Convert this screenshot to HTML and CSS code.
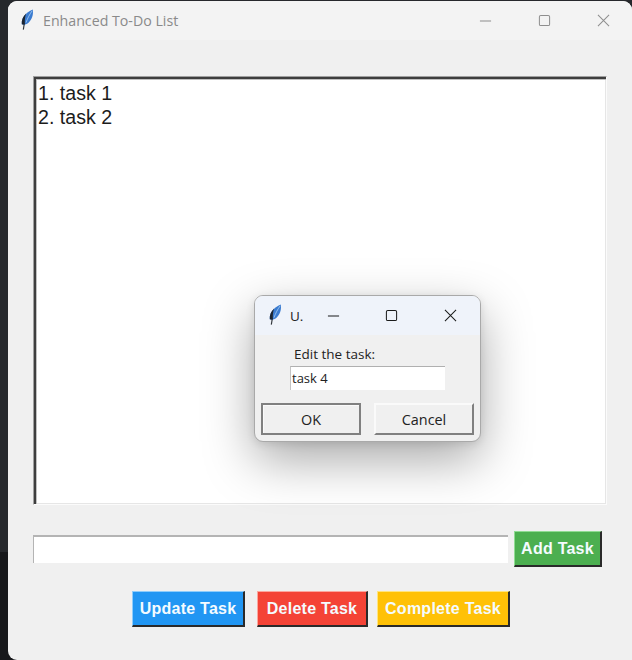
FILE: index.html
```html
<!DOCTYPE html>
<html lang="en">
<head>
<meta charset="utf-8">
<title>Enhanced To-Do List</title>
<link rel="stylesheet" href="styles.css">
</head>
<body>
<svg class="defs" width="0" height="0" aria-hidden="true">
  <symbol id="feather" viewBox="0 0 12 20">
    <path d="M2 19.6 L3 14" stroke="#30343a" stroke-width="1.1" fill="none"/>
    <path d="M0.6 14.6 C-0.2 9.8 3.4 3.4 11 0.4 C12 5.6 9.8 11 6.4 13.6 C4.8 14.8 2.6 15.2 0.6 14.6 Z" fill="#3a7bd0"/>
    <path d="M0.6 14.6 C0.1 11 1.6 7.4 4.6 4.4 C3.6 8 3.2 11 3.6 14.8 C2.6 15 1.6 14.9 0.6 14.6 Z" fill="#1c2530"/>
    <path d="M4.6 13 C5.8 9.4 7.8 5.4 10.4 1.8" stroke="#a4ccf2" stroke-width="0.8" fill="none"/>
  </symbol>
</svg>
<div class="window">
  <header class="titlebar">
    <svg class="feather"><use href="#feather"/></svg>
    <span class="title">Enhanced To-Do List</span>
    <div class="controls">
      <svg class="ctl" viewBox="0 0 14 14"><path d="M1 7.5H13"/></svg>
      <svg class="ctl" viewBox="0 0 14 14"><rect x="1.5" y="1.5" width="11" height="11" rx="1.5"/></svg>
      <svg class="ctl" viewBox="0 0 14 14"><path d="M1 1L13 13M13 1L1 13"/></svg>
    </div>
  </header>
  <main class="content">
    <div class="listbox">
      <div>1. task 1</div>
      <div>2. task 2</div>
    </div>
    <div class="add-row">
      <div class="entry"></div>
      <div class="btn btn-add">Add Task</div>
    </div>
    <div class="btn-row">
      <div class="btn btn-update">Update Task</div>
      <div class="btn btn-delete">Delete Task</div>
      <div class="btn btn-complete">Complete Task</div>
    </div>
  </main>
</div>
<div class="dialog">
  <header class="dlg-title">
    <svg class="dlg-feather"><use href="#feather"/></svg>
    <span class="dlg-name">U.</span>
    <svg class="dlg-ctl dlg-min" viewBox="0 0 14 14"><path d="M1 7.5H13"/></svg>
    <svg class="dlg-ctl dlg-max" viewBox="0 0 14 14"><rect x="1.5" y="1.5" width="11" height="11" rx="1.5"/></svg>
    <svg class="dlg-ctl dlg-close" viewBox="0 0 14 14"><path d="M1 1L13 13M13 1L1 13"/></svg>
  </header>
  <div class="dlg-body">
    <div class="dlg-label">Edit the task:</div>
    <div class="dlg-entry">task 4</div>
    <div class="dlg-buttons">
      <div class="dlg-btn dlg-ok">OK</div>
      <div class="dlg-btn">Cancel</div>
    </div>
  </div>
</div>
</body>
</html>
```
FILE: styles.css
```css
* { box-sizing: border-box; }
html, body { height: 100%; }
body {
  margin: 0;
  width: 632px;
  height: 660px;
  overflow: hidden;
  background: linear-gradient(#26282c 0, #26282c 552px, #17181b 552px);
  font-family: "Liberation Sans", Arial, sans-serif;
  position: relative;
}
.defs { position: absolute; }
.window {
  margin: 1px 0 0 8px;
  height: 659px;
  background: #f0f0f0;
  border-radius: 9px 9px 0 9px;
  display: flex;
  flex-direction: column;
  overflow: hidden;
}
.titlebar {
  height: 39px;
  flex: none;
  background: #f3f3f3;
  display: flex;
  align-items: center;
  padding-left: 13px;
}
.feather { width: 13px; height: 21px; margin-right: 9px; margin-top: -2px; }
.title {
  font-family: "Open Sans", "Noto Sans", sans-serif;
  font-size: 14.2px;
  color: #8a8a8a;
}
.controls {
  margin-left: auto;
  display: flex;
  gap: 46px;
  padding-right: 22px;
}
.ctl { width: 13px; height: 13px; fill: none; stroke: #8e8e8e; stroke-width: 1.1; }
.content {
  flex: 1;
  padding: 36px 0 0 25px;
  display: flex;
  flex-direction: column;
}
.listbox {
  width: 574px;
  height: 429px;
  background: #fff;
  border: 1px solid;
  border-color: #a0a0a0 #fbfbfb #fbfbfb #a0a0a0;
  box-shadow: inset 2px 2px 0 #3e3e3e, inset 3px 3px 0 #c0c0c0, inset -1px -1px 0 #e6e6e6;
  padding: 4px 0 0 4px;
  font-size: 19.6px;
  line-height: 24px;
  color: #1c1c1c;
}
.add-row {
  display: flex;
  align-items: center;
  margin-top: 26px;
  width: 569px;
  justify-content: space-between;
}
.entry {
  width: 475px;
  height: 28px;
  background: #fff;
  border-top: 2px solid #b4b4b4;
  border-left: 1px solid #b4b4b4;
}
.btn {
  height: 36px;
  display: flex;
  align-items: center;
  justify-content: center;
  font-size: 16px;
  font-weight: 700;
  color: #f4fbff;
  border-style: solid;
  border-width: 1px 2px 2px 1px;
  border-right-color: #2a2a2a;
  border-bottom-color: #2a2a2a;
  letter-spacing: 0.25px;
}
.btn-add { width: 88px; background: #4caf50; border-top-color: #90dc93; border-left-color: #90dc93; }
.btn-row {
  display: flex;
  margin-top: 24px;
  margin-left: 99px;
  gap: 12px;
}
.btn-update { width: 113px; background: #2196f3; border-top-color: #8fcdfb; border-left-color: #8fcdfb; }
.btn-delete { width: 111px; background: #f44336; border-top-color: #fba79f; border-left-color: #fba79f; }
.btn-complete { width: 133px; background: #ffc107; border-top-color: #ffe57e; border-left-color: #ffe57e; margin-left: -3px; }
.dialog {
  position: absolute;
  left: 254px;
  top: 295px;
  width: 227px;
  height: 147px;
  background: #f0f0f0;
  border: 1px solid #a9a9a9;
  border-radius: 9px;
  box-shadow: 0 18px 50px rgba(0, 0, 0, 0.34), 0 2px 8px rgba(0, 0, 0, 0.1);
  overflow: hidden;
  z-index: 2;
}
.dlg-title {
  height: 39px;
  background: #eff3fa;
  display: flex;
  align-items: center;
  padding-left: 14px;
}
.dlg-feather { width: 13px; height: 21px; margin-top: -2px; }
.dlg-name {
  font-family: "Open Sans", "Noto Sans", sans-serif;
  font-size: 13.5px;
  color: #222;
  margin-left: 8px;
  width: 15px;
}
.dlg-ctl { width: 13px; height: 13px; fill: none; stroke: #1a1a1a; stroke-width: 1.1; flex: none; }
.dlg-min { margin-left: 22px; margin-top: -1px; }
.dlg-max { margin-left: 45px; margin-top: -1px; }
.dlg-close { margin-left: 46px; margin-top: -1px; }
.dlg-body { padding: 0 6px; }
.dlg-label {
  font-family: "Open Sans", "Noto Sans", sans-serif;
  font-size: 13.5px;
  line-height: 18px;
  margin: 10px 0 0 33px;
  color: #222;
}
.dlg-entry {
  width: 155px;
  height: 24px;
  margin: 3px 0 0 29px;
  background: #fff;
  border-top: 1px solid #b0b0b0;
  border-left: 1px solid #c4c4c4;
  font-family: "Open Sans", "Noto Sans", sans-serif;
  font-size: 13px;
  line-height: 22px;
  padding-left: 1px;
  color: #222;
}
.dlg-buttons {
  display: flex;
  justify-content: space-between;
  margin-top: 13px;
}
.dlg-btn {
  width: 100px;
  height: 32px;
  background: #f0f0f0;
  border: 2px solid;
  border-color: #fafafa #808080 #808080 #fafafa;
  font-family: "Open Sans", "Noto Sans", sans-serif;
  font-size: 14.4px;
  color: #222;
  display: flex;
  align-items: center;
  justify-content: center;
}
.dlg-ok { border-color: #808080; box-shadow: inset 1px 1px 0 #fafafa; }
```
